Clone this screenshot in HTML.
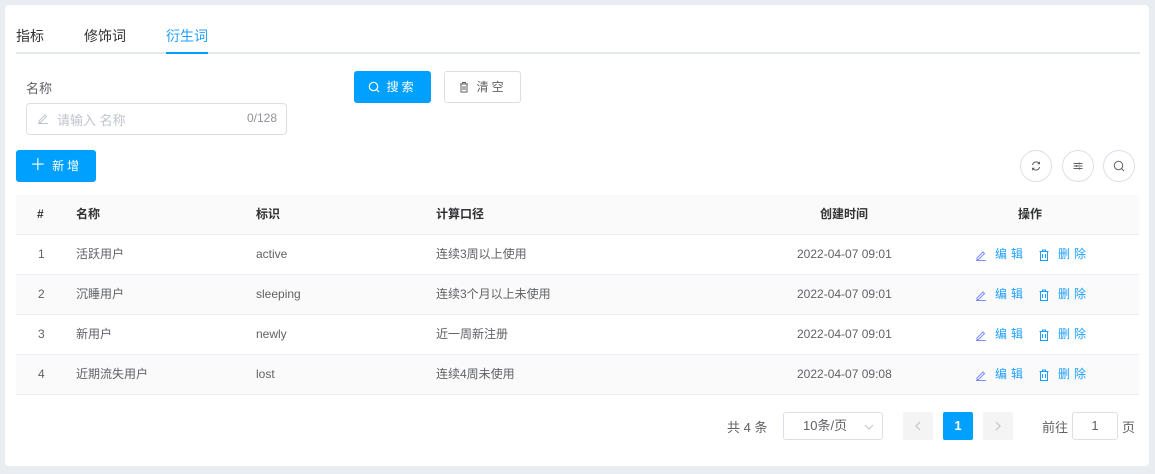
<!DOCTYPE html>
<html><head><meta charset="utf-8"><style>
*{box-sizing:border-box;margin:0;padding:0}
body{width:1155px;height:474px;background:#e9edf1;font-family:"Liberation Sans","Noto Sans CJK SC",sans-serif;font-size:12px;color:#606266;position:relative;overflow:hidden}
.card{position:absolute;left:5px;top:5px;width:1144px;height:461px;background:#fff;border-radius:4px}
.a{position:absolute;white-space:nowrap}
.tab{top:26px;font-size:14px;color:#303133}
.row{position:absolute;left:16px;width:1123px;height:40px;border-bottom:1px solid #ebeef5}
.cell{position:absolute;top:0;line-height:39px;color:#606266}
.btn{position:absolute;border-radius:3px;font-size:12px;text-align:center;letter-spacing:3px}
.circ{position:absolute;top:150px;width:32px;height:32px;border:1px solid #dcdfe6;border-radius:50%}
.op{color:#1e9fff;letter-spacing:4px}
.ic{position:absolute;top:14px}
</style></head><body>
<div class="card"></div>
<div class="a tab" style="left:16px">指标</div>
<div class="a tab" style="left:84px">修饰词</div>
<div class="a tab" style="left:166px;color:#1e9fff">衍生词</div>
<div class="a" style="left:16px;top:52px;width:1124px;height:2px;background:#e4e7ed"></div>
<div class="a" style="left:166px;top:52px;width:42px;height:2px;background:#00a0ff"></div>

<div class="a" style="left:26px;top:78px;font-size:13px;color:#606266">名称</div>
<div class="a" style="left:26px;top:103px;width:261px;height:32px;border:1px solid #dcdfe6;border-radius:4px"></div>
<svg class="a" style="left:37px;top:112px" width="12" height="12" viewBox="0 0 12 12" fill="none" stroke="#c0c4cc" stroke-width="1"><path d="M2 9l6-6 1.5 1.5-6 6H2z M1 11.5h10"/></svg>
<div class="a" style="left:57px;top:110px;font-size:13px;color:#c0c4cc">请输入 名称</div>
<div class="a" style="left:247px;top:111px;color:#909399">0/128</div>

<div class="btn" style="left:354px;top:71px;width:77px;height:32px;background:#00a0ff;color:#fff;line-height:32px">
<svg style="vertical-align:-2px" width="12" height="12" viewBox="0 0 12 12" fill="none" stroke="#fff" stroke-width="1.2"><circle cx="5.5" cy="5.5" r="4.2"/><path d="M8.5 8.5l2.5 2.5"/></svg> 搜索</div>
<div class="btn" style="left:444px;top:71px;width:77px;height:32px;border:1px solid #dcdfe6;color:#606266;line-height:30px">
<svg style="vertical-align:-2px" width="12" height="12" viewBox="0 0 12 12" fill="none" stroke="#606266" stroke-width="1"><path d="M2 3h8M4.5 3V1.5h3V3M3 3v8h6V3M5 5v4M7 5v4"/></svg> 清空</div>

<div class="btn" style="left:16px;top:150px;width:80px;height:32px;background:#00a0ff;color:#fff;line-height:32px"><span style="font-size:16px;letter-spacing:0">＋</span> 新增</div>

<div class="circ" style="left:1020px"><svg style="position:absolute;left:9px;top:9px" width="12" height="12" viewBox="0 0 12 12" fill="none" stroke="#606266" stroke-width="1"><path d="M2.5 5a3.7 3.7 0 0 1 6.8-1.3M9.5 7a3.7 3.7 0 0 1-6.8 1.3M9.5 1.8v2h-2M2.5 10.2v-2h2"/></svg></div>
<div class="circ" style="left:1062px"><svg style="position:absolute;left:9px;top:9px" width="12" height="12" viewBox="0 0 12 12" fill="none" stroke="#606266" stroke-width="1"><path d="M1.5 3.5h9M1.5 6h9M1.5 8.5h9M7 2.5v2M4.5 5v2M7.5 7.5v2"/></svg></div>
<div class="circ" style="left:1103px"><svg style="position:absolute;left:9px;top:9px" width="12" height="12" viewBox="0 0 12 12" fill="none" stroke="#606266" stroke-width="1"><circle cx="5.5" cy="5.5" r="4.2"/><path d="M8.5 8.5l2.5 2.5"/></svg></div>

<div class="row" style="top:195px;background:#fafafa">
<div class="cell" style="left:21px;font-weight:bold;color:#303133">#</div>
<div class="cell" style="left:60px;font-weight:bold;color:#303133">名称</div>
<div class="cell" style="left:240px;font-weight:bold;color:#303133">标识</div>
<div class="cell" style="left:420px;font-weight:bold;color:#303133">计算口径</div>
<div class="cell" style="left:804px;font-weight:bold;color:#303133">创建时间</div>
<div class="cell" style="left:1002px;font-weight:bold;color:#303133">操作</div>
</div>

<div class="row" style="top:235px">
<div class="cell" style="left:22px">1</div><div class="cell" style="left:60px">活跃用户</div><div class="cell" style="left:240px">active</div><div class="cell" style="left:420px">连续3周以上使用</div><div class="cell" style="left:781px">2022-04-07 09:01</div>
<svg class="ic" style="left:959px" width="12" height="12" viewBox="0 0 12 12" fill="none" stroke="#7b8cff" stroke-width="1"><path d="M2 9l6-6 1.5 1.5-6 6H2z M1 11.5h10"/></svg><div class="cell op" style="left:979px">编辑</div>
<svg class="ic" style="left:1022px" width="12" height="12" viewBox="0 0 12 12" fill="none" stroke="#1e9fff" stroke-width="1"><path d="M1.5 2.5h9M4.5 2.5V1h3v1.5M2.5 2.5v9h7v-9M4.5 5v4M7.5 5v4"/></svg><div class="cell op" style="left:1042px">删除</div></div>
<div class="row" style="top:275px;background:#fafafa">
<div class="cell" style="left:22px">2</div><div class="cell" style="left:60px">沉睡用户</div><div class="cell" style="left:240px">sleeping</div><div class="cell" style="left:420px">连续3个月以上未使用</div><div class="cell" style="left:781px">2022-04-07 09:01</div>
<svg class="ic" style="left:959px" width="12" height="12" viewBox="0 0 12 12" fill="none" stroke="#7b8cff" stroke-width="1"><path d="M2 9l6-6 1.5 1.5-6 6H2z M1 11.5h10"/></svg><div class="cell op" style="left:979px">编辑</div>
<svg class="ic" style="left:1022px" width="12" height="12" viewBox="0 0 12 12" fill="none" stroke="#1e9fff" stroke-width="1"><path d="M1.5 2.5h9M4.5 2.5V1h3v1.5M2.5 2.5v9h7v-9M4.5 5v4M7.5 5v4"/></svg><div class="cell op" style="left:1042px">删除</div></div>
<div class="row" style="top:315px">
<div class="cell" style="left:22px">3</div><div class="cell" style="left:60px">新用户</div><div class="cell" style="left:240px">newly</div><div class="cell" style="left:420px">近一周新注册</div><div class="cell" style="left:781px">2022-04-07 09:01</div>
<svg class="ic" style="left:959px" width="12" height="12" viewBox="0 0 12 12" fill="none" stroke="#7b8cff" stroke-width="1"><path d="M2 9l6-6 1.5 1.5-6 6H2z M1 11.5h10"/></svg><div class="cell op" style="left:979px">编辑</div>
<svg class="ic" style="left:1022px" width="12" height="12" viewBox="0 0 12 12" fill="none" stroke="#1e9fff" stroke-width="1"><path d="M1.5 2.5h9M4.5 2.5V1h3v1.5M2.5 2.5v9h7v-9M4.5 5v4M7.5 5v4"/></svg><div class="cell op" style="left:1042px">删除</div></div>
<div class="row" style="top:355px;background:#fafafa">
<div class="cell" style="left:22px">4</div><div class="cell" style="left:60px">近期流失用户</div><div class="cell" style="left:240px">lost</div><div class="cell" style="left:420px">连续4周未使用</div><div class="cell" style="left:781px">2022-04-07 09:08</div>
<svg class="ic" style="left:959px" width="12" height="12" viewBox="0 0 12 12" fill="none" stroke="#7b8cff" stroke-width="1"><path d="M2 9l6-6 1.5 1.5-6 6H2z M1 11.5h10"/></svg><div class="cell op" style="left:979px">编辑</div>
<svg class="ic" style="left:1022px" width="12" height="12" viewBox="0 0 12 12" fill="none" stroke="#1e9fff" stroke-width="1"><path d="M1.5 2.5h9M4.5 2.5V1h3v1.5M2.5 2.5v9h7v-9M4.5 5v4M7.5 5v4"/></svg><div class="cell op" style="left:1042px">删除</div></div>

<div class="a" style="left:727px;top:417px;font-size:13px">共 4 条</div>
<div class="a" style="left:783px;top:412px;width:100px;height:28px;border:1px solid #dcdfe6;border-radius:3px;line-height:26px;padding-left:19px;font-size:13px">10条/页<svg style="position:absolute;right:8px;top:11px" width="10" height="6" viewBox="0 0 10 6" fill="none" stroke="#c0c4cc"><path d="M1 1l4 4 4-4"/></svg></div>
<div class="a" style="left:903px;top:412px;width:30px;height:28px;background:#f4f4f5;border-radius:2px"><svg style="position:absolute;left:12px;top:9px" width="6" height="10" viewBox="0 0 6 10" fill="none" stroke="#c0c4cc" stroke-width="1.2"><path d="M5 1L1 5l4 4"/></svg></div>
<div class="a" style="left:943px;top:412px;width:30px;height:28px;background:#00a0ff;border-radius:2px;text-align:center;line-height:28px;color:#fff;font-weight:bold;font-size:13px">1</div>
<div class="a" style="left:983px;top:412px;width:30px;height:28px;background:#f4f4f5;border-radius:2px"><svg style="position:absolute;left:12px;top:9px" width="6" height="10" viewBox="0 0 6 10" fill="none" stroke="#c0c4cc" stroke-width="1.2"><path d="M1 1l4 4-4 4"/></svg></div>
<div class="a" style="left:1042px;top:417px;font-size:13px">前往</div>
<div class="a" style="left:1072px;top:412px;width:46px;height:28px;border:1px solid #dcdfe6;border-radius:3px;text-align:center;line-height:26px;font-size:13px">1</div>
<div class="a" style="left:1122px;top:417px;font-size:13px">页</div>
</body></html>
